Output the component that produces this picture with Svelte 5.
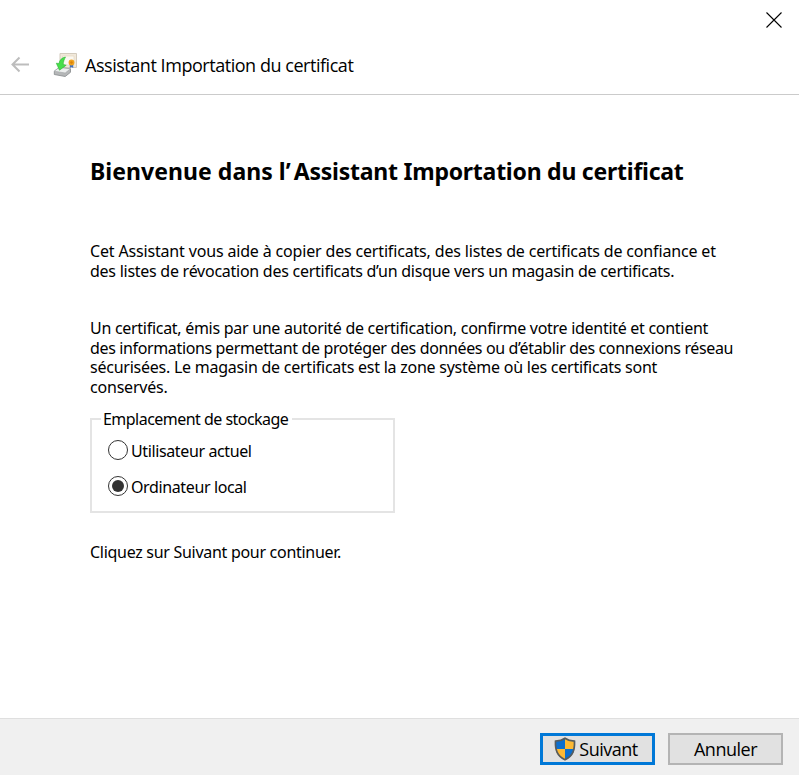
<script>
  let store = $state('local');
  const intro = [
    { text: 'Cet Assistant vous aide à copier des certificats, des listes de certificats de confiance et', track: -0.165 },
    { text: 'des listes de révocation des certificats d’un disque vers un magasin de certificats.', track: -0.26 }
  ];
  const details = [
    { text: 'Un certificat, émis par une autorité de certification, confirme votre identité et contient', track: -0.285 },
    { text: 'des informations permettant de protéger des données ou d’établir des connexions réseau', track: -0.36 },
    { text: 'sécurisées. Le magasin de certificats est la zone système où les certificats sont', track: -0.24 },
    { text: 'conservés.', track: -0.2 }
  ];
  const choices = [
    { id: 'user', label: 'Utilisateur actuel' },
    { id: 'local', label: 'Ordinateur local' }
  ];
</script>

<div class="wizard">
  <header>
    <div class="caption">
      <button class="close" aria-label="Fermer">
        <svg width="16" height="16" viewBox="0 0 16 16"><path d="M.5 .5 15.5 15.5M15.5 .5 .5 15.5" stroke="#000" stroke-width="1.1" /></svg>
      </button>
    </div>
    <div class="titlebar">
      <button class="back" aria-label="Précédent">
        <svg width="19" height="17" viewBox="0 0 19 17"><path d="M1.500 8.500H18M8.500 1.500l-7 7 7 7" fill="none" stroke="#bdbdbd" stroke-width="2" /></svg>
      </button>
      <svg class="cert" width="26" height="26" viewBox="0 0 26 26">
        <path d="M7 1.500h16.500v14H7z" fill="#f1e9db" stroke="#d3cbbd" />
        <path d="M9.500 4h11.500v9H9.500z" fill="#fbf8f1" stroke="#e5d9c0" stroke-width=".7" />
        <path d="M16.800 11.500v4.500l1.700-1 1.700 1v-4.500z" fill="#3d6fc4" />
        <circle cx="18.500" cy="10.500" r="2.900" fill="#f0a21c" />
        <circle cx="18.500" cy="10.500" r="1.200" fill="#d98208" />
        <path d="M1.300 19.200 6 15.500l11.500 1.300v3.500l-5.300 4.200-10.900-2z" fill="#b5b7b8" stroke="#85898c" stroke-width=".8" />
        <path d="M1.300 19.200 6 15.500l11.500 1.300-5.300 4.200z" fill="#eceeee" stroke="#a0a3a5" stroke-width=".6" />
        <path d="M12.500 5C9 5.500 6.500 8 6 11.500L3.300 11.200l3.200 7 6.700-5-3-.7c.1-2.800 1-5 2.300-7.500z" fill="#48df4b" stroke="#2fb338" stroke-width=".6" />
      </svg>
      <span class="name">Assistant Importation du certificat</span>
    </div>
  </header>

  <main>
    <h1><span class="lead">Bienvenue dans l</span><span class="apos">’</span>Assistant Importation du certificat</h1>
    <p class="intro">{#each intro as line}<span class="line" style:letter-spacing="{line.track}px">{line.text}</span>{/each}</p>
    <p class="details">{#each details as line}<span class="line" style:letter-spacing="{line.track}px">{line.text}</span>{/each}</p>
    <fieldset>
      <legend>Emplacement de stockage</legend>
      {#each choices as c}
        <label>
          <input type="radio" name="store" value={c.id} bind:group={store} />
          <span>{c.label}</span>
        </label>
      {/each}
    </fieldset>
    <p class="hint">Cliquez sur Suivant pour continuer.</p>
  </main>

  <footer>
    <button class="btn primary">
      <svg width="22" height="24" viewBox="0 0 22 24">
        <path d="M11 1C8.300 3 5 4 1.500 4.200 1.300 13 3 19 11 23z" fill="#0b6fd0" />
        <path d="M11 1c2.700 2 6 3 9.500 3.200C20.700 13 19 19 11 23z" fill="#fdb933" />
        <path d="M1.700 12H11v11C5 20.200 2.200 16.800 1.700 12z" fill="#fdb933" />
        <path d="M20.300 12H11v11c6-2.800 8.800-6.200 9.300-11z" fill="#0b6fd0" />
        <path d="M11 1.200C8.300 3.200 5 4 1.500 4.200 1.200 13 3 19 11 22.800 19 19 20.800 13 20.500 4.200 17 4 13.700 3.200 11 1.200z" fill="none" stroke="#565c5e" stroke-width="1.700" />
      </svg>
      <span>Suivant</span>
    </button>
    <button class="btn">Annuler</button>
  </footer>
</div>

<style>
  :global(body) { margin: 0; background: #fff; }
  .wizard {
    width: 799px; height: 775px; box-sizing: border-box;
    display: flex; flex-direction: column;
    background: #fff; color: #000;
    font: 16px/20px 'Noto Sans', 'Open Sans', sans-serif;
  }
  button { font: inherit; color: inherit; padding: 0; border: 0; background: none; }
  header { height: 94px; border-bottom: 1px solid #cbcbcb; }
  .caption { height: 39px; display: flex; justify-content: flex-end; align-items: center; padding-right: 17px; }
  .close, .back { display: flex; }
  .titlebar { display: flex; align-items: center; height: 51px; padding-left: 11px; }
  .cert { margin-left: 23px; }
  .name { margin: 1px 0 0 6px; font: 18px/24px 'Open Sans', sans-serif; white-space: nowrap; letter-spacing: -0.46px; }
  main { flex: 1; padding: 61px 60px 0 90px; }
  h1 { margin: 0; font: bold 23px/30px 'Noto Sans', sans-serif; white-space: nowrap; letter-spacing: -0.24px; }
  .lead { letter-spacing: 0.05px; }
  .apos { letter-spacing: 3px; }
  p { margin: 0; }
  .line { display: block; white-space: nowrap; line-height: 19.500px; }
  .intro { margin-top: 56px; }
  .details { margin-top: 38px; }
  fieldset {
    margin: 12px 0 0; width: 305px; height: 104px; box-sizing: border-box;
    border: 2px solid #e4e4e4; padding: 3px 0 0 16px;
  }
  legend { padding: 0 4px 0 2px; margin-left: -7px; letter-spacing: -0.53px; }
  label { display: flex; align-items: center; height: 36px; gap: 3px; letter-spacing: -0.38px; }
  label span { margin-top: 1px; }
  input {
    appearance: none; margin: 0; width: 20px; height: 20px; border-radius: 50%;
    border: 1.500px solid #333; display: grid; place-items: center; background: #fff; box-sizing: border-box;
  }
  input:checked::before { content: ''; width: 12px; height: 12px; border-radius: 50%; background: #333; }
  .hint { margin-top: 29px; letter-spacing: -0.29px; }
  footer {
    height: 57px; box-sizing: border-box; border-top: 1px solid #dfdfdf; background: #f0f0f0;
    display: flex; justify-content: flex-end; align-items: flex-start; gap: 13px; padding: 14px 16px 0 0;
  }
  .btn {
    width: 115px; height: 32px; box-sizing: border-box; border: 2px solid #b4b4b4; background: #e1e1e1;
    display: flex; align-items: center; justify-content: center; gap: 3px;
    font: 18px/24px 'Open Sans', sans-serif; letter-spacing: -0.5px;
  }
  .primary { border: 3px solid #0078d7; padding-right: 3px; }
</style>
